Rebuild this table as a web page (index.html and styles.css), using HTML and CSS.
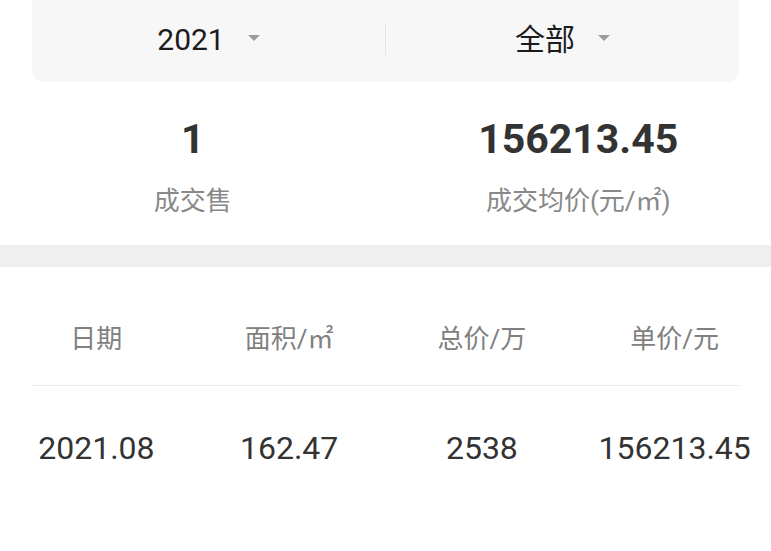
FILE: index.html
```html
<!DOCTYPE html>
<html lang="zh-CN">
<head>
<meta charset="utf-8">
<title>成交</title>
<link rel="stylesheet" href="styles.css">
</head>
<body>
<div class="filter-card">
  <div class="filter-item">
    <span class="filter-text">2021</span>
    <span class="caret"></span>
  </div>
  <div class="filter-divider"></div>
  <div class="filter-item">
    <span class="filter-text">全部</span>
    <span class="caret"></span>
  </div>
</div>

<div class="stats">
  <div class="stat">
    <div class="stat-value">1</div>
    <div class="stat-label">成交售</div>
  </div>
  <div class="stat">
    <div class="stat-value">156213.45</div>
    <div class="stat-label">成交均价(元/㎡)</div>
  </div>
</div>

<div class="band"></div>

<div class="table">
  <div class="row head">
    <div class="cell">日期</div>
    <div class="cell">面积/㎡</div>
    <div class="cell">总价/万</div>
    <div class="cell">单价/元</div>
  </div>
  <div class="rule"></div>
  <div class="row data">
    <div class="cell">2021.08</div>
    <div class="cell">162.47</div>
    <div class="cell">2538</div>
    <div class="cell">156213.45</div>
  </div>
</div>
</body>
</html>
```

FILE: styles.css
```css
html, body {
  margin: 0;
  padding: 0;
  background: #ffffff;
}

body {
  font-family: Roboto, "Noto Sans CJK SC", sans-serif;
  color: #333333;
}

.filter-card {
  margin: 0 32px;
  height: 80px;
  padding-bottom: 2px;
  background: #f7f7f7;
  border-radius: 0 0 12px 12px;
  display: flex;
  align-items: center;
}

.filter-item {
  flex: 1;
  display: flex;
  justify-content: center;
  align-items: center;
}

.filter-text {
  font-size: 30px;
  line-height: 36px;
  color: #1c1c1c;
}

.caret {
  width: 0;
  height: 0;
  margin-left: 23px;
  margin-bottom: 4px;
  border-left: 6.5px solid transparent;
  border-right: 6.5px solid transparent;
  border-top: 6px solid #9c9c9c;
}

.filter-divider {
  width: 1px;
  height: 32px;
  margin-bottom: 2px;
  background: #e4e4e4;
}

.stats {
  display: flex;
  padding: 32px 0 26px;
}

.stat {
  flex: 1;
  display: flex;
  flex-direction: column;
  align-items: center;
}

.stat-value {
  font-size: 41px;
  line-height: 50px;
  font-weight: 700;
  color: #333333;
}

.stat-label {
  margin-top: 19px;
  font-size: 26px;
  line-height: 36px;
  color: #888888;
}

.band {
  height: 22px;
  background: #f0f0f0;
}

.row {
  display: flex;
}

.cell {
  flex: 1;
  text-align: center;
}

.head {
  padding: 54px 0 28px;
}

.head .cell {
  font-size: 26px;
  line-height: 36px;
  color: #808080;
}

.rule {
  height: 1px;
  margin: 0 32px;
  background: #e8e8e8;
}

.data {
  padding-top: 42px;
}

.data .cell {
  font-size: 32px;
  line-height: 40px;
  color: #333333;
}
```
